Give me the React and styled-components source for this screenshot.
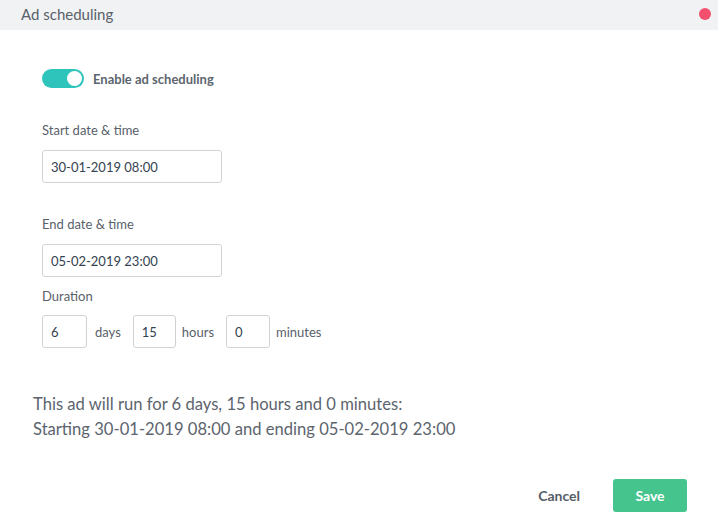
import React from "react";
import styled, { createGlobalStyle } from "styled-components";

const Global = createGlobalStyle`
  *, *::before, *::after { box-sizing: border-box; }
  html, body { margin: 0; padding: 0; background: #fff; }
  body { font-family: Lato, "Open Sans", Arial, sans-serif; color: #555d66; }
`;

const Dialog = styled.div`
  width: 718px;
  height: 520px;
  background: #fff;
  display: flex;
  flex-direction: column;
`;

const Header = styled.div`
  height: 30px;
  background: #f1f2f4;
  display: flex;
  align-items: center;
  justify-content: space-between;
  padding: 0 7px 2px 21px;
`;

const Title = styled.div`
  font-size: 15px;
  color: #59616a;
`;

const CloseDot = styled.span`
  width: 12px;
  height: 12px;
  border-radius: 50%;
  background: #f2506e;
`;

const Body = styled.div`
  padding: 39px 42px 0 42px;
  display: flex;
  flex-direction: column;
`;

const ToggleRow = styled.label`
  display: flex;
  align-items: center;
  gap: 9px;
  font-size: 13px;
  font-weight: 700;
  color: #5d656e;
  height: 19px;
`;

const Track = styled.span`
  width: 42px;
  height: 19px;
  border-radius: 10px;
  background: #2ec4bb;
  display: flex;
  align-items: center;
  justify-content: ${(p) => (p.$on ? "flex-end" : "flex-start")};
  padding: 0 2px;
`;

const Knob = styled.span`
  width: 15px;
  height: 15px;
  border-radius: 50%;
  background: #fff;
`;

const Label = styled.div`
  font-size: 13px;
  line-height: 16px;
  color: #59616a;
  margin-top: ${(p) => p.$mt}px;
`;

const TextBox = styled.div`
  width: 180px;
  height: 33px;
  border: 1px solid #cfd2d6;
  border-radius: 3px;
  display: flex;
  align-items: center;
  padding-left: 8px;
  font-size: 13px;
  color: #33424f;
  margin-top: 12px;
`;

const DurationRow = styled.div`
  display: flex;
  align-items: center;
  margin-top: 11px;
`;

const SmallBox = styled.div`
  width: ${(p) => p.$w}px;
  height: 33px;
  border: 1px solid #cfd2d6;
  border-radius: 3px;
  display: flex;
  align-items: center;
  padding-left: 8px;
  font-size: 13px;
  color: #33424f;
`;

const Unit = styled.span`
  font-size: 13px;
  color: #59616a;
  margin: 0 ${(p) => p.$mr}px 0 ${(p) => p.$ml}px;
`;

const Summary = styled.div`
  margin: 44px 0 0 -9px;
  font-size: 16.6px;
  line-height: 25px;
  color: #5c646d;
`;

const Footer = styled.div`
  margin-top: auto;
  display: flex;
  justify-content: flex-end;
  align-items: center;
  gap: 33px;
  padding: 0 31px 8px 0;
`;

const CancelButton = styled.button`
  border: none;
  background: transparent;
  font-family: inherit;
  font-size: 14px;
  font-weight: 700;
  color: #555d66;
  padding: 0;
`;

const SaveButton = styled.button`
  width: 74px;
  height: 33px;
  border: none;
  border-radius: 3px;
  background: #45c48e;
  color: #fff;
  font-family: inherit;
  font-size: 14px;
  font-weight: 700;
`;

export default function App() {
  return (
    <>
      <Global />
      <Dialog>
        <Header>
          <Title>Ad scheduling</Title>
          <CloseDot />
        </Header>
        <Body>
          <ToggleRow>
            <Track $on>
              <Knob />
            </Track>
            Enable ad scheduling
          </ToggleRow>
          <Label $mt={34}>Start date &amp; time</Label>
          <TextBox>30-01-2019 08:00</TextBox>
          <Label $mt={33}>End date &amp; time</Label>
          <TextBox>05-02-2019 23:00</TextBox>
          <Label $mt={11}>Duration</Label>
          <DurationRow>
            <SmallBox $w={45}>6</SmallBox>
            <Unit $ml={8} $mr={12}>days</Unit>
            <SmallBox $w={43}>15</SmallBox>
            <Unit $ml={6} $mr={12}>hours</Unit>
            <SmallBox $w={44}>0</SmallBox>
            <Unit $ml={6} $mr={0}>minutes</Unit>
          </DurationRow>
          <Summary>
            This ad will run for 6 days, 15 hours and 0 minutes:
            <br />
            Starting 30-01-2019 08:00 and ending 05-02-2019 23:00
          </Summary>
        </Body>
        <Footer>
          <CancelButton>Cancel</CancelButton>
          <SaveButton>Save</SaveButton>
        </Footer>
      </Dialog>
    </>
  );
}
